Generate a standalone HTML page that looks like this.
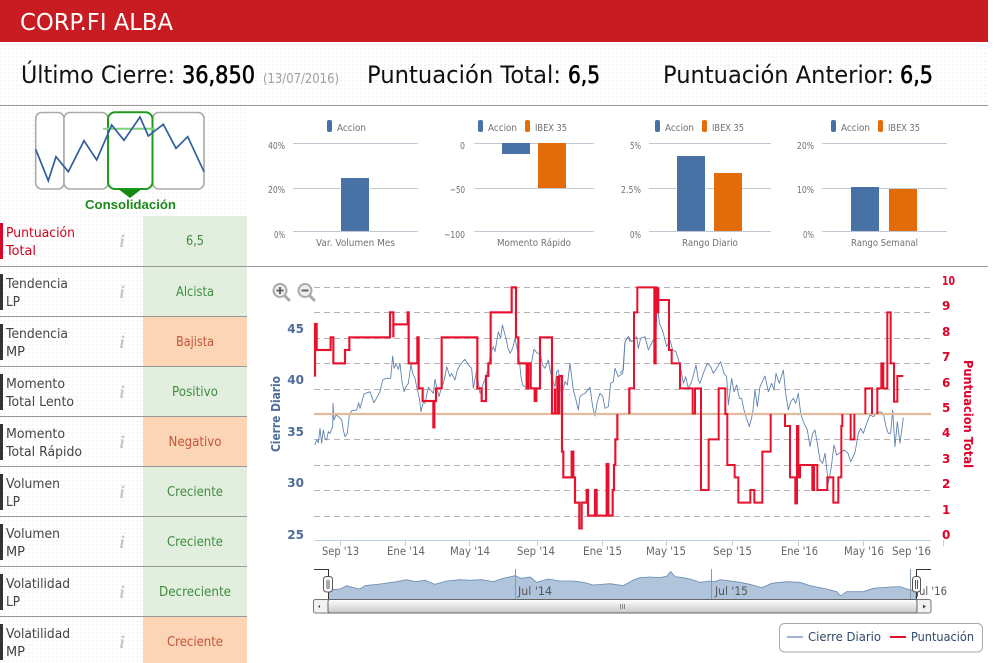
<!DOCTYPE html>
<html lang="es"><head><meta charset="utf-8"><title>CORP.FI ALBA</title>
<style>
html,body{margin:0;padding:0;background:#fff;width:994px;height:663px;overflow:hidden}
svg{display:block}
text{font-family:"DejaVu Sans","Liberation Sans",sans-serif}
.h{font-size:24px;fill:#111}
.hb{font-size:24px;fill:#000;stroke:#000;stroke-width:.6}
.l{font-size:13px;fill:#444}
.v{font-size:13px;text-anchor:middle}
.g{fill:#3f8c3f}.o{fill:#c4553a}
.i{font-family:"Liberation Serif",serif;font-style:italic;font-weight:bold;font-size:18px;fill:#c8c8c8;text-anchor:middle}
.s{font-size:10px;fill:#707070}
.x{font-size:11.5px;fill:#666}
.ly{font-size:12px;font-weight:bold;fill:#4d6d9a;text-anchor:end}
.ry{font-size:12px;font-weight:bold;fill:#e0002a}
.bar{fill:#333}
</style></head><body>
<svg width="994" height="663" viewBox="0 0 994 663" xmlns="http://www.w3.org/2000/svg">
<defs><pattern id="d" width="4" height="4" patternUnits="userSpaceOnUse"><rect width="4" height="4" fill="#fff"/><rect width="2" height="2" fill="#f6f6f6"/></pattern>
<linearGradient id="sb" x1="0" y1="0" x2="0" y2="1"><stop offset="0" stop-color="#fff"/><stop offset="1" stop-color="#c8c8c8"/></linearGradient></defs>
<rect width="994" height="663" fill="#fff"/>
<rect y="42" width="988" height="63" fill="url(#d)"/>
<rect y="105" width="247" height="558" fill="url(#d)"/>
<rect width="988" height="42" fill="#c91c22"/>
<text x="20" y="30" font-size="23" fill="#fff" textLength="153" lengthAdjust="spacingAndGlyphs">CORP.FI ALBA</text>

<text class="h" x="21" y="83" textLength="154" lengthAdjust="spacingAndGlyphs">Último Cierre:</text>
<text class="hb" x="182" y="83" textLength="73" lengthAdjust="spacingAndGlyphs">36,850</text>
<text x="263" y="83" font-size="13" fill="#a0a0a0" textLength="76" lengthAdjust="spacingAndGlyphs">(13/07/2016)</text>
<text class="h" x="367" y="83" textLength="194" lengthAdjust="spacingAndGlyphs">Puntuación Total:</text>
<text class="hb" x="568" y="83" textLength="32" lengthAdjust="spacingAndGlyphs">6,5</text>
<text class="h" x="663" y="83" textLength="231" lengthAdjust="spacingAndGlyphs">Puntuación Anterior:</text>
<text class="hb" x="900" y="83" textLength="33" lengthAdjust="spacingAndGlyphs">6,5</text>
<rect y="105" width="988" height="1" fill="#999"/>

<!-- pattern diagram -->
<g fill="#fff" stroke="#aaa" stroke-width="1.6">
<rect x="35.7" y="112.5" width="28.3" height="76.5" rx="6"/>
<rect x="64" y="112.5" width="44" height="76.5" rx="6"/>
<rect x="152.7" y="112.5" width="51.3" height="76.5" rx="6"/>
</g>
<rect x="108" y="112.3" width="44.5" height="76.7" rx="7" fill="#fff" stroke="#1f9a1f" stroke-width="2"/>
<path d="M103 128.7H155" stroke="#7fd07f" stroke-width="2" fill="none"/>
<path d="M119 189.5H141L130 198Z" fill="#128a12"/>
<path d="M35.7 149.3L48.3 180.7 56 156.7 68.3 171.7 84 140.7 96.7 160 111.7 125 124 140.3 140 117 148.3 136 163.3 124.3 176 148.3 187.7 136.7 204 171.7" fill="none" stroke="#2f5fa0" stroke-width="1.7"/>
<text x="85" y="209" font-size="13" font-weight="bold" fill="#1c8a1c" style="font-family:'Liberation Sans',sans-serif" textLength="91" lengthAdjust="spacingAndGlyphs">Consolidación</text>

<!-- table -->
<rect x="143" y="216" width="104" height="50" fill="#e2efdf"/>
<rect x="143" y="267" width="104" height="49" fill="#e2efdf"/>
<rect x="143" y="317" width="104" height="49" fill="#fcd4b6"/>
<rect x="143" y="367" width="104" height="49" fill="#e2efdf"/>
<rect x="143" y="417" width="104" height="49" fill="#fcd4b6"/>
<rect x="143" y="467" width="104" height="49" fill="#e2efdf"/>
<rect x="143" y="517" width="104" height="49" fill="#e2efdf"/>
<rect x="143" y="567" width="104" height="49" fill="#e2efdf"/>
<rect x="143" y="617" width="104" height="46" fill="#fcd4b6"/>
<rect y="266" width="988" height="1" fill="#999"/>
<g fill="#999"><rect y="316" width="247" height="1"/><rect y="366" width="247" height="1"/><rect y="416" width="247" height="1"/><rect y="466" width="247" height="1"/><rect y="516" width="247" height="1"/><rect y="566" width="247" height="1"/><rect y="616" width="247" height="1"/></g>
<rect y="223" width="3" height="36" fill="#d8062a"/>
<rect class="bar" y="274" width="3" height="36"/><rect class="bar" y="324" width="3" height="36"/><rect class="bar" y="374" width="3" height="36"/><rect class="bar" y="424" width="3" height="36"/><rect class="bar" y="474" width="3" height="36"/><rect class="bar" y="524" width="3" height="36"/><rect class="bar" y="574" width="3" height="36"/><rect class="bar" y="624" width="3" height="36"/>

<text class="l" x="6" y="237" style="fill:#d0021f" textLength="69" lengthAdjust="spacingAndGlyphs">Puntuación</text><text class="l" x="6" y="255" style="fill:#d0021f" textLength="30" lengthAdjust="spacingAndGlyphs">Total</text>
<text class="l" x="6" y="288" textLength="62" lengthAdjust="spacingAndGlyphs">Tendencia</text><text class="l" x="6" y="306" textLength="14" lengthAdjust="spacingAndGlyphs">LP</text>
<text class="l" x="6" y="338" textLength="62" lengthAdjust="spacingAndGlyphs">Tendencia</text><text class="l" x="6" y="356" textLength="19" lengthAdjust="spacingAndGlyphs">MP</text>
<text class="l" x="6" y="388" textLength="59" lengthAdjust="spacingAndGlyphs">Momento</text><text class="l" x="6" y="406" textLength="68" lengthAdjust="spacingAndGlyphs">Total Lento</text>
<text class="l" x="6" y="438" textLength="59" lengthAdjust="spacingAndGlyphs">Momento</text><text class="l" x="6" y="456" textLength="76" lengthAdjust="spacingAndGlyphs">Total Rápido</text>
<text class="l" x="6" y="488" textLength="54" lengthAdjust="spacingAndGlyphs">Volumen</text><text class="l" x="6" y="506" textLength="14" lengthAdjust="spacingAndGlyphs">LP</text>
<text class="l" x="6" y="538" textLength="54" lengthAdjust="spacingAndGlyphs">Volumen</text><text class="l" x="6" y="556" textLength="19" lengthAdjust="spacingAndGlyphs">MP</text>
<text class="l" x="6" y="588" textLength="64" lengthAdjust="spacingAndGlyphs">Volatilidad</text><text class="l" x="6" y="606" textLength="14" lengthAdjust="spacingAndGlyphs">LP</text>
<text class="l" x="6" y="638" textLength="64" lengthAdjust="spacingAndGlyphs">Volatilidad</text><text class="l" x="6" y="656" textLength="19" lengthAdjust="spacingAndGlyphs">MP</text>

<text class="i" x="122" y="247">i</text><text class="i" x="122" y="298">i</text><text class="i" x="122" y="348">i</text><text class="i" x="122" y="398">i</text><text class="i" x="122" y="448">i</text><text class="i" x="122" y="498">i</text><text class="i" x="122" y="548">i</text><text class="i" x="122" y="598">i</text><text class="i" x="122" y="648">i</text>

<text class="v g" x="195" y="245" textLength="18" lengthAdjust="spacingAndGlyphs">6,5</text>
<text class="v g" x="195" y="296" textLength="38" lengthAdjust="spacingAndGlyphs">Alcista</text>
<text class="v o" x="195" y="346" textLength="38" lengthAdjust="spacingAndGlyphs">Bajista</text>
<text class="v g" x="195" y="396" textLength="46" lengthAdjust="spacingAndGlyphs">Positivo</text>
<text class="v o" x="195" y="446" textLength="53" lengthAdjust="spacingAndGlyphs">Negativo</text>
<text class="v g" x="195" y="496" textLength="56" lengthAdjust="spacingAndGlyphs">Creciente</text>
<text class="v g" x="195" y="546" textLength="56" lengthAdjust="spacingAndGlyphs">Creciente</text>
<text class="v g" x="195" y="596" textLength="72" lengthAdjust="spacingAndGlyphs">Decreciente</text>
<text class="v o" x="195" y="646" textLength="56" lengthAdjust="spacingAndGlyphs">Creciente</text>

<!-- bar charts -->
<g stroke="#c0c8d4" stroke-width="1" fill="none">
<path d="M293 143.5H418M293 188.5H418M293 231.5H418"/>
<path d="M474 143.5H594M474 188.5H594M474 231.5H594"/>
<path d="M649 143.5H771M649 188.5H771M649 231.5H771"/>
<path d="M822 143.5H947M822 188.5H947M822 231.5H947"/>
</g>
<g fill="#4872a6">
<rect x="340" y="188" width="30" height="2" fill="#fff"/><rect x="341" y="178" width="28" height="53"/>
<rect x="502" y="143" width="28" height="11"/>
<rect x="676" y="188" width="30" height="1" fill="#fff"/><rect x="677" y="156" width="28" height="75"/>
<rect x="851" y="187" width="28" height="44"/>
</g>
<g fill="#e36c09">
<rect x="538" y="143" width="28" height="45"/>
<rect x="714" y="173" width="28" height="58"/>
<rect x="889" y="189" width="28" height="42"/>
</g>
<g fill="#4872a6"><rect x="327" y="120" width="5" height="12" rx="2"/><rect x="478" y="120" width="5" height="12" rx="2"/><rect x="655" y="120" width="5" height="12" rx="2"/><rect x="831" y="120" width="5" height="12" rx="2"/></g>
<g fill="#e36c09"><rect x="525" y="120" width="5" height="12" rx="2"/><rect x="702" y="120" width="5" height="12" rx="2"/><rect x="878" y="120" width="5" height="12" rx="2"/></g>
<g class="s">
<text class="s" x="337" y="131" textLength="29" lengthAdjust="spacingAndGlyphs">Accion</text>
<text class="s" x="488" y="131" textLength="29" lengthAdjust="spacingAndGlyphs">Accion</text>
<text class="s" x="535" y="131" textLength="32" lengthAdjust="spacingAndGlyphs">IBEX 35</text>
<text class="s" x="665" y="131" textLength="29" lengthAdjust="spacingAndGlyphs">Accion</text>
<text class="s" x="712" y="131" textLength="32" lengthAdjust="spacingAndGlyphs">IBEX 35</text>
<text class="s" x="841" y="131" textLength="29" lengthAdjust="spacingAndGlyphs">Accion</text>
<text class="s" x="888" y="131" textLength="32" lengthAdjust="spacingAndGlyphs">IBEX 35</text>

<text class="s" x="268" y="149" textLength="17" lengthAdjust="spacingAndGlyphs">40%</text>
<text class="s" x="268" y="193" textLength="17" lengthAdjust="spacingAndGlyphs">20%</text>
<text class="s" x="274" y="238" textLength="11" lengthAdjust="spacingAndGlyphs">0%</text>
<text class="s" x="460" y="149" textLength="5" lengthAdjust="spacingAndGlyphs">0</text>
<text class="s" x="450" y="193" textLength="15" lengthAdjust="spacingAndGlyphs">−50</text>
<text class="s" x="444" y="238" textLength="21" lengthAdjust="spacingAndGlyphs">−100</text>
<text class="s" x="630" y="149" textLength="11" lengthAdjust="spacingAndGlyphs">5%</text>
<text class="s" x="621" y="193" textLength="20" lengthAdjust="spacingAndGlyphs">2.5%</text>
<text class="s" x="630" y="238" textLength="11" lengthAdjust="spacingAndGlyphs">0%</text>
<text class="s" x="797" y="149" textLength="17" lengthAdjust="spacingAndGlyphs">20%</text>
<text class="s" x="797" y="193" textLength="17" lengthAdjust="spacingAndGlyphs">10%</text>
<text class="s" x="803" y="238" textLength="11" lengthAdjust="spacingAndGlyphs">0%</text>

<text class="s" x="316" y="246" textLength="79" lengthAdjust="spacingAndGlyphs">Var. Volumen Mes</text>
<text class="s" x="497" y="246" textLength="74" lengthAdjust="spacingAndGlyphs">Momento Rápido</text>
<text class="s" x="682" y="246" textLength="56" lengthAdjust="spacingAndGlyphs">Rango Diario</text>
<text class="s" x="851" y="246" textLength="67" lengthAdjust="spacingAndGlyphs">Rango Semanal</text>
</g>

<!-- main chart grid -->
<g stroke="#b4b4b4" stroke-width="1" stroke-dasharray="6 4" fill="none">
<path d="M314 287.5H931M314 312.5H931M314 338.5H931M314 363.5H931M314 389.5H931M314 439.5H931M314 465.5H931M314 490.5H931M314 516.5H931"/>
</g>
<path d="M314 540.5H931" stroke="#c0d0e0" stroke-width="1"/>
<path d="M340.5 540V546M405.5 540V546M469.5 540V546M537.5 540V546M602.5 540V546M666.5 540V546M732.5 540V546M798.5 540V546M863.5 540V546M943.5 540V546" stroke="#c0d0e0" stroke-width="1"/>

<!-- blue line -->
<g transform="translate(260 270) scale(.33333)" fill="none" stroke="#5b80ae" stroke-width="2.6" stroke-linejoin="round">
<path d="M164 525L170 510 175 518 180 475 185 520 190 480 195 505 200 510 205 485 210 490 218 470 219 400 222 450 228 435 238 442 245 450 250 480 255 500 262 490 268 435 275 422 290 420 296 398 300 415 312 372 322 368 330 365 342 398 352 380 360 365 368 330 378 325 392 325 398 258 402 295 408 282 415 298 420 280 426 335 432 365 438 350 445 340 453 282 458 310 465 325 470 350 478 385 483 425 490 395 495 400 505 352 512 360 520 370 525 328 532 360 537 380 545 350 550 340 555 320 560 290 570 320 575 310 585 330 592 300 600 285 615 268 625 285 635 295 640 355 650 300 655 335 660 370 670 340 678 320 685 290 692 250 700 230 705 245 715 185 722 205 727 165 738 205 744 235 750 250 758 235 765 205 778 270 783 320 788 345 800 355 805 325 810 300 816 270 822 238 832 250 840 250 848 285 855 295 865 270 872 310 878 330 885 350 890 305 895 300 905 378 915 335 922 345 930 280 940 360 948 390 955 420 960 380 965 375 975 370 990 352 998 410 1005 438 1012 395 1020 370 1028 378 1035 415 1045 410 1052 340 1060 335 1065 295 1075 320 1088 310 1095 215 1105 200 1110 215"/>
</g>
<g transform="translate(620 270) scale(.33333)" fill="none" stroke="#5b80ae" stroke-width="2.6" stroke-linejoin="round">
<path d="M0 310L10 300 15 215 25 200 35 215 42 210 50 200 55 235 62 205 75 200 85 240 92 225 100 210 108 190 112 95 118 160 125 175 130 190 140 230 150 210 158 240 168 245 180 285 190 340 197 320 205 355 215 335 228 285 235 330 240 340 250 310 262 280 272 290 280 310 290 295 302 275 312 310 320 320 325 405 335 325 342 365 350 345 358 385 365 385 372 420 378 440 388 470 398 430 405 360 412 410 420 350 435 318 445 365 455 340 462 360 468 310 478 340 490 300 497 370 505 420 512 395 520 385 527 400 535 370 542 430 550 455 562 480 570 530 578 490 585 480 592 520 600 570 608 580 615 550 625 640 634 590 642 525 650 555 658 550 672 540 684 550 692 575 705 548 715 490 722 475 730 490 740 460 750 435 760 440 770 430 780 425 790 430 798 470 805 490 812 490 818 420 825 530 832 455 840 520 850 443"/>
</g>

<path d="M314 414H931" stroke="#e2bb9d" stroke-width="2.2"/>

<!-- red line -->
<g transform="translate(260 270) scale(.33333)" fill="none" stroke="#f7a9b5" stroke-width="8.5" stroke-linejoin="miter" opacity=".55">
<path d="M165 320V162H170V240H212V202H220V280H255V240H268V202H390V127H400V202V163H443V127H446V280H472V202H476V355H488V393H520V472H523V393H528V355H545V202H652V355H665V393H678V318H685V280H692V127H755V52H768V202H775V280H800V355H805V280H812V355H824V393H829V355H840V202H876V430H885V355V430H892V318V430H898V318H906V545H910V622H935V545H940V622H945V698H958V775H965V698H980V660H984V737H1005V660H1010V737H1040V582H1045V737H1058V660H1062V585H1066V508H1072V432"/>
</g>
<g transform="translate(260 270) scale(.33333)" fill="none" stroke="#e8112d" stroke-width="6" stroke-linejoin="miter">
<path d="M165 320V162H170V240H212V202H220V280H255V240H268V202H390V127H400V202V163H443V127H446V280H472V202H476V355H488V393H520V472H523V393H528V355H545V202H652V355H665V393H678V318H685V280H692V127H755V52H768V202H775V280H800V355H805V280H812V355H824V393H829V355H840V202H876V430H885V355V430H892V318V430H898V318H906V545H910V622H935V545H940V622H945V698H958V775H965V698H980V660H984V737H1005V660H1010V737H1040V582H1045V737H1058V660H1062V585H1066V508H1072V432"/>
<path d="M1108 432V355H1110"/>
</g>
<g transform="translate(620 270) scale(.33333)" fill="none" stroke="#e8112d" stroke-width="6" stroke-linejoin="miter">
<path d="M28 430V355H42V127H52V52H103V280H107V52H110V127H115V52V90H147V240H155V280H180V355H218V430H225V355H243V660H266V508H296V355H316V432H322V585H344V622H355V698H391V660H403V698H427V545H452V432M495 432V468H510V622H526V700H531V468H535V622H540V585H577V660H582V585H592V660H622V622H640V698H655V622H664V468H667V432M692 432V508H703V432M736 432V355H756V432M772 432V355H784V280H790V355H802V127H812V280H822V395H832V318H850"/>
</g>

<!-- zoom icons -->
<g fill="none" stroke-linecap="round">
<path d="M285 296L289 300M310 296L314 300" stroke="#aaa" stroke-width="3"/>
<circle cx="280" cy="290.5" r="6.5" fill="#eee" stroke="#aaa" stroke-width="2"/>
<circle cx="305" cy="290.5" r="6.5" fill="#eee" stroke="#aaa" stroke-width="2"/>
<path d="M276.5 290.5H283.5M280 287V294M301.5 290.5H308.5" stroke="#666" stroke-width="2" stroke-linecap="butt"/>
</g>

<!-- axis labels -->
<text class="ly" x="304" y="333">45</text><text class="ly" x="304" y="384">40</text><text class="ly" x="304" y="436">35</text><text class="ly" x="304" y="487">30</text><text class="ly" x="304" y="539">25</text>
<text class="ry" x="942" y="285" textLength="13" lengthAdjust="spacingAndGlyphs">10</text>
<text class="ry" x="942" y="310">9</text><text class="ry" x="942" y="336">8</text><text class="ry" x="942" y="361">7</text><text class="ry" x="942" y="387">6</text><text class="ry" x="942" y="412">5</text><text class="ry" x="942" y="437">4</text><text class="ry" x="942" y="463">3</text><text class="ry" x="942" y="488">2</text><text class="ry" x="942" y="514">1</text><text class="ry" x="942" y="539">0</text>
<text transform="translate(280 452) rotate(-90)" font-size="12" font-weight="bold" fill="#4d6d9a" textLength="76" lengthAdjust="spacingAndGlyphs">Cierre Diario</text>
<text transform="translate(964 360) rotate(90)" font-size="12" font-weight="bold" fill="#e0002a" textLength="108" lengthAdjust="spacingAndGlyphs">Puntuacion Total</text>

<text class="x" x="322" y="555" textLength="37" lengthAdjust="spacingAndGlyphs">Sep '13</text>
<text class="x" x="387" y="555" textLength="38" lengthAdjust="spacingAndGlyphs">Ene '14</text>
<text class="x" x="450" y="555" textLength="40" lengthAdjust="spacingAndGlyphs">May '14</text>
<text class="x" x="517" y="555" textLength="38" lengthAdjust="spacingAndGlyphs">Sep '14</text>
<text class="x" x="583" y="555" textLength="39" lengthAdjust="spacingAndGlyphs">Ene '15</text>
<text class="x" x="646" y="555" textLength="40" lengthAdjust="spacingAndGlyphs">May '15</text>
<text class="x" x="713" y="555" textLength="39" lengthAdjust="spacingAndGlyphs">Sep '15</text>
<text class="x" x="781" y="555" textLength="37" lengthAdjust="spacingAndGlyphs">Ene '16</text>
<text class="x" x="844" y="555" textLength="40" lengthAdjust="spacingAndGlyphs">May '16</text>
<text class="x" x="892" y="555" textLength="39" lengthAdjust="spacingAndGlyphs">Sep '16</text>

<!-- navigator -->
<g transform="translate(300 565) scale(.33333)">
<path d="M86 102V70L100 74 120 72 140 62 160 68 180 72 195 62 240 57 290 50 320 44 345 50 375 46 405 58 440 48 480 44 510 46 545 44 580 50 610 40 645 32 665 40 690 36 710 52 745 42 780 48 820 48 850 52 880 60 930 56 970 62 1000 45 1020 38V102Z" fill="#b0c4dc" stroke="none"/>
<path d="M86 70L100 74 120 72 140 62 160 68 180 72 195 62 240 57 290 50 320 44 345 50 375 46 405 58 440 48 480 44 510 46 545 44 580 50 610 40 645 32 665 40 690 36 710 52 745 42 780 48 820 48 850 52 880 60 930 56 970 62 1000 45 1020 38" fill="none" stroke="#6d8cb5" stroke-width="2.5"/>
</g>
<g transform="translate(640 565) scale(.33333)">
<path d="M0 102V38L30 36 60 38 80 34 92 20 105 35 130 38 150 42 180 52 210 48 225 50 240 44 300 52 330 58 365 68 395 55 440 50 480 52 510 62 560 72 590 80 602 93 620 80 670 80 700 70 750 66 780 65 810 75 830 72V102Z" fill="#b0c4dc"/>
<path d="M0 38L30 36 60 38 80 34 92 20 105 35 130 38 150 42 180 52 210 48 225 50 240 44 300 52 330 58 365 68 395 55 440 50 480 52 510 62 560 72 590 80 602 93 620 80 670 80 700 70 750 66 780 65 810 75 830 72" fill="none" stroke="#6d8cb5" stroke-width="2.5"/>
</g>
<path d="M515.5 569V599M711.5 569V599M910.5 569V599" stroke="#8a98a8" stroke-width="1"/>
<text class="x" x="518" y="595" textLength="34" lengthAdjust="spacingAndGlyphs" style="fill:#555">Jul '14</text>
<text class="x" x="715" y="595" textLength="33" lengthAdjust="spacingAndGlyphs" style="fill:#555">Jul '15</text>
<text class="x" x="916" y="595" textLength="31" lengthAdjust="spacingAndGlyphs" style="fill:#555">Jul '16</text>

<path d="M314 569.5H328.5V600M931 569.5H916.5V600" fill="none" stroke="#333" stroke-width="1"/>
<rect x="313.5" y="599.5" width="617.5" height="13.5" rx="2" fill="#f2f2f2" stroke="#777"/>
<rect x="328" y="599.5" width="589" height="13.5" rx="2" fill="url(#sb)" stroke="#666"/>
<path d="M320 605V608L318 606.5ZM923 604.5V608.5L926 606.5Z" fill="#444"/>
<path d="M620.5 604V609M622.5 604V609M624.5 604V609" stroke="#888"/>
<g fill="#fff" stroke="#555"><rect x="323.5" y="576.5" width="9" height="15.5" rx="3"/><rect x="912.5" y="576.5" width="8" height="15.5" rx="3"/></g>
<path d="M327 580V589M329 580V589M915.5 580V589M917.5 580V589" stroke="#555"/>

<!-- legend -->
<rect x="779.5" y="623.5" width="203" height="28.5" rx="5" fill="#fff" stroke="#aaa"/>
<path d="M787 637H803" stroke="#a0b4cf" stroke-width="2"/>
<path d="M890 637H906" stroke="#e0102e" stroke-width="2"/>
<text x="808" y="641" font-size="12" fill="#2f4a6a" textLength="73" lengthAdjust="spacingAndGlyphs">Cierre Diario</text>
<text x="911" y="641" font-size="12" fill="#2f4a6a" textLength="63" lengthAdjust="spacingAndGlyphs">Puntuación</text>
</svg>
</body></html>
